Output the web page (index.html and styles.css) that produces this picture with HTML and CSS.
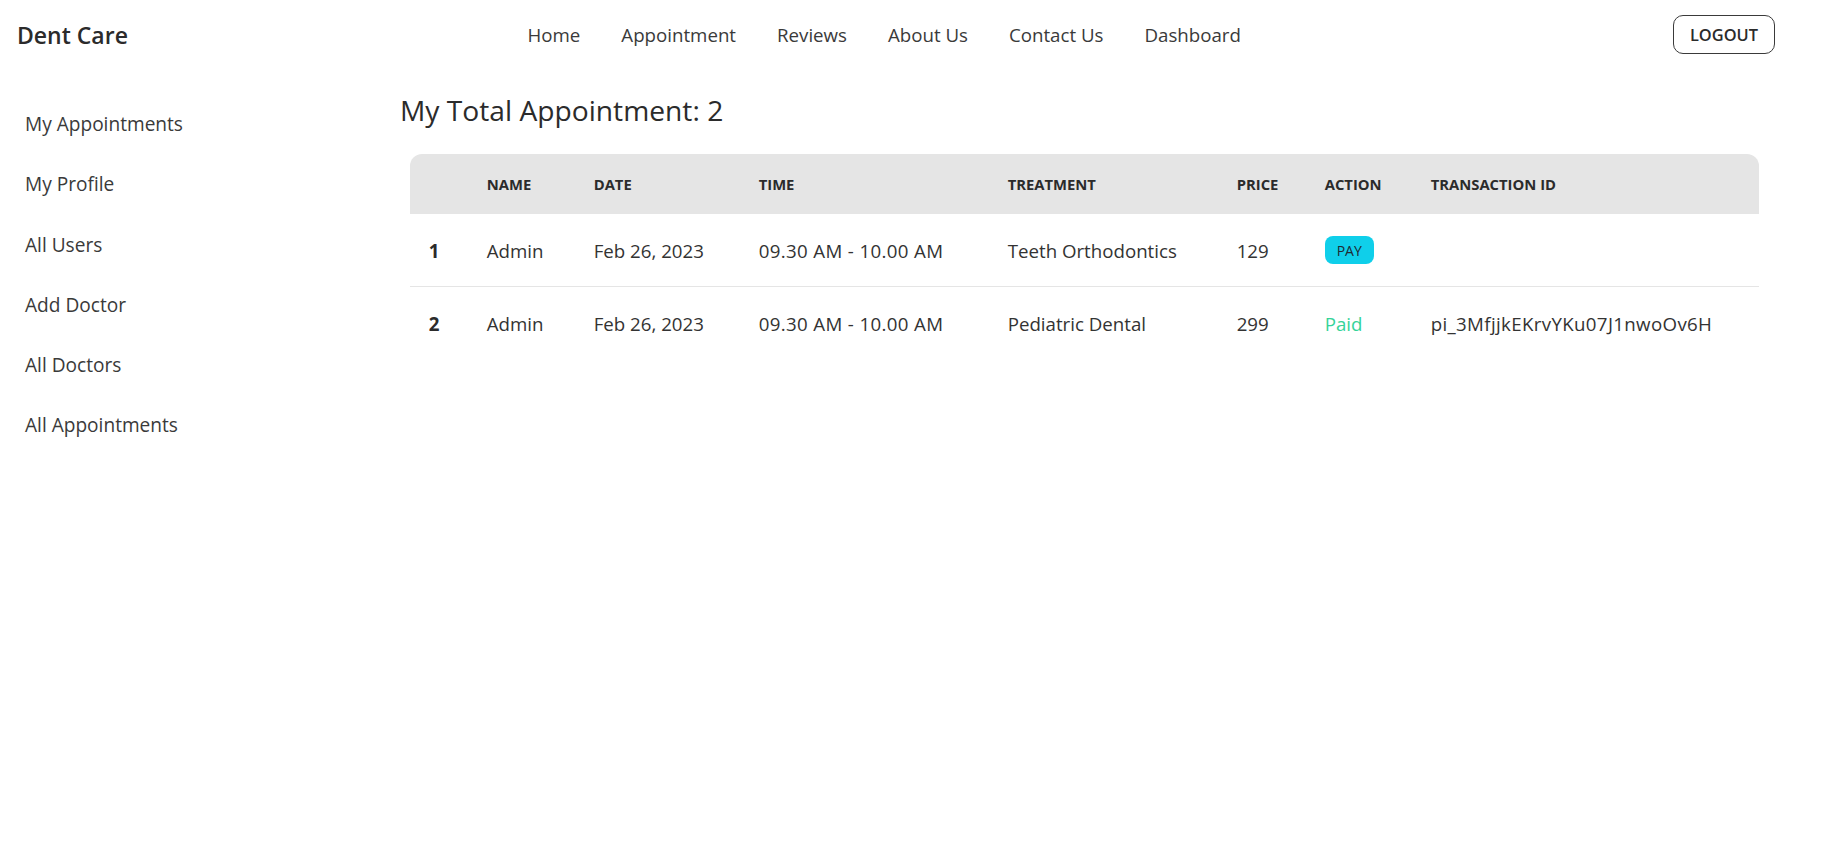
FILE: index.html
```html
<!DOCTYPE html>
<html lang="en">
<head>
<meta charset="utf-8">
<title>Dent Care</title>
<link rel="stylesheet" href="styles.css">
</head>
<body>
<header class="navbar">
  <div class="navbar-start"><a class="brand" href="#">Dent Care</a></div>
  <nav class="nav-links">
    <a href="#">Home</a>
    <a href="#">Appointment</a>
    <a href="#">Reviews</a>
    <a href="#">About Us</a>
    <a href="#">Contact Us</a>
    <a href="#">Dashboard</a>
  </nav>
  <div class="navbar-end"><button class="logout">LOGOUT</button></div>
</header>
<div class="layout">
  <aside class="sidebar">
    <ul class="side-menu">
      <li><a href="#">My Appointments</a></li>
      <li><a href="#">My Profile</a></li>
      <li><a href="#">All Users</a></li>
      <li><a href="#">Add Doctor</a></li>
      <li><a href="#">All Doctors</a></li>
      <li><a href="#">All Appointments</a></li>
    </ul>
  </aside>
  <main class="content">
    <h2 class="title">My Total Appointment: 2</h2>
    <div class="table-wrap">
      <table class="appt-table">
        <colgroup>
          <col class="c-idx"><col class="c-name"><col class="c-date"><col class="c-time">
          <col class="c-treat"><col class="c-price"><col class="c-action"><col class="c-trx">
        </colgroup>
        <thead>
          <tr>
            <th></th><th>Name</th><th>Date</th><th>Time</th><th>Treatment</th><th>Price</th><th>Action</th><th>Transaction Id</th>
          </tr>
        </thead>
        <tbody>
          <tr>
            <th>1</th><td>Admin</td><td>Feb 26, 2023</td><td class="wide">09.30 AM - 10.00 AM</td><td>Teeth Orthodontics</td><td>129</td>
            <td><button class="pay-btn">PAY</button></td><td></td>
          </tr>
          <tr>
            <th>2</th><td>Admin</td><td>Feb 26, 2023</td><td class="wide">09.30 AM - 10.00 AM</td><td>Pediatric Dental</td><td>299</td>
            <td><span class="paid">Paid</span></td><td class="wide">pi_3MfjjkEKrvYKu07J1nwoOv6H</td>
          </tr>
        </tbody>
      </table>
    </div>
  </main>
</div>
</body>
</html>
```
FILE: styles.css
```css
* { box-sizing: border-box; }

body {
  margin: 0;
  font-family: "Open Sans", "Noto Sans", sans-serif;
  color: #333333;
  background: #ffffff;
}

a { color: inherit; text-decoration: none; }

/* Navbar */
.navbar {
  display: flex;
  align-items: center;
  height: 69px;
  padding: 0 57px 0 17px;
}
.navbar-start { flex: 0 0 490px; }
.brand {
  font-size: 23px;
  font-weight: 600;
  color: #2b2b2b;
}
.nav-links { display: flex; }
.nav-links a {
  padding: 0 20.5px;
  font-size: 18.7px;
  color: #3a3a3a;
}
.navbar-end { margin-left: auto; }
.logout {
  height: 39px;
  padding: 0 16px;
  border: 1px solid #3a3a3a;
  border-radius: 10px;
  background: #ffffff;
  font-family: inherit;
  font-size: 16.4px;
  font-weight: 600;
  color: #2b2b2b;
}

/* Layout */
.layout { display: flex; }
.sidebar {
  flex: 0 0 400px;
  padding-top: 25px;
}
.side-menu { list-style: none; margin: 0; padding: 0; }
.side-menu li { height: 60.3px; }
.side-menu a {
  display: block;
  line-height: 60px;
  padding-left: 25px;
  font-size: 19.1px;
  color: #3a3a3a;
}

.content {
  flex: 1;
  padding: 22px 73px 0 0;
}
.title {
  margin: 0 0 25px;
  font-size: 28.2px;
  font-weight: 400;
  line-height: 38px;
  color: #2b2b2b;
}

.table-wrap { margin-left: 10px; }
.appt-table {
  width: 1349px;
  border-collapse: separate;
  border-spacing: 0;
  table-layout: fixed;
  font-size: 18.7px;
}
.c-idx { width: 58px; }
.c-name { width: 107px; }
.c-date { width: 165px; }
.c-time { width: 249px; }
.c-treat { width: 229px; }
.c-price { width: 88px; }
.c-action { width: 106px; }
.c-trx { width: 347px; }

.appt-table thead th {
  height: 60px;
  padding: 0 18.7px;
  background: #e5e5e5;
  text-align: left;
  font-size: 14.8px;
  font-weight: 700;
  text-transform: uppercase;
  color: #2b2b2b;
  vertical-align: middle;
}
.appt-table thead th:first-child { border-top-left-radius: 12px; }
.appt-table thead th:last-child { border-top-right-radius: 12px; }

.appt-table tbody th,
.appt-table tbody td {
  height: 73px;
  padding: 0 18.7px;
  text-align: left;
  vertical-align: middle;
  white-space: nowrap;
  color: #333333;
  font-weight: 400;
}
.appt-table tbody td.wide { letter-spacing: 0.35px; }
.appt-table tbody th { font-weight: 700; color: #2b2b2b; }
.appt-table tbody tr:first-child th,
.appt-table tbody tr:first-child td { border-bottom: 1px solid #e5e5e5; }

.pay-btn {
  height: 28px;
  padding: 0 12px;
  border: none;
  border-radius: 8px;
  background: #0fcfea;
  font-family: inherit;
  font-size: 14px;
  font-weight: 400;
  color: #1f2a33;
}
.paid { color: #36d399; }
```
